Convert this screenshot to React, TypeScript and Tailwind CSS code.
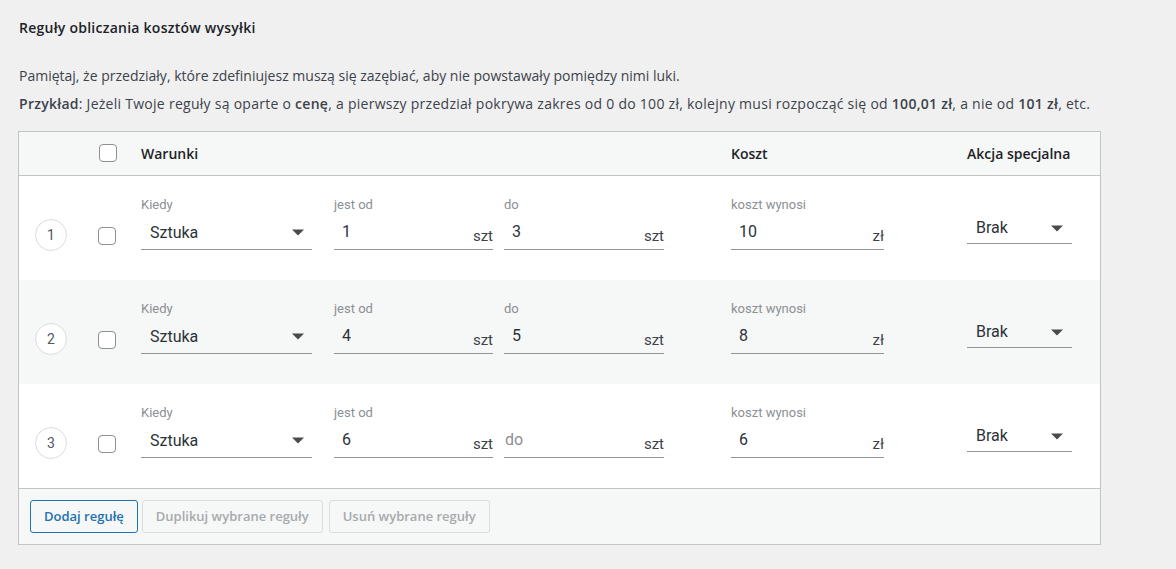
import { useState } from 'react'

type Rule = {
  id: number
  from: string
  to: string
  cost: string
}

const rules: Rule[] = [
  { id: 1, from: '1', to: '3', cost: '10' },
  { id: 2, from: '4', to: '5', cost: '8' },
  { id: 3, from: '6', to: '', cost: '6' },
]

const wpFont = { fontFamily: '"Open Sans", "Noto Sans", sans-serif' }
const inputFont = { fontFamily: 'Roboto, "Liberation Sans", Arial, sans-serif' }

function Caret() {
  return (
    <svg width="12" height="7" viewBox="0 0 12 7" className="shrink-0">
      <path d="M0 0.5 L12 0.5 L6 6.5 Z" fill="#4a4a4a" />
    </svg>
  )
}

function Checkbox() {
  return <span className="block w-[18px] h-[18px] rounded-[4px] border border-[#8c8f94] bg-white" />
}

function FieldLabel({ children }: { children: React.ReactNode }) {
  return (
    <div className="text-[13px] leading-[14px] text-[#8c8f94] h-[14px]" style={inputFont}>
      {children}
    </div>
  )
}

function NumberField({ label, value, unit, width, placeholder }: { label: string; value: string; unit: string; width: string; placeholder?: string }) {
  // empty field: label hidden, placeholder sits on the line like a floating label
  return (
    <div className={width}>
      <FieldLabel>{value ? label : ''}</FieldLabel>
      <div className="mt-[2px] h-[36px] border-b border-[#949494] flex items-end pb-[5px]" style={inputFont}>
        <span
          className={`flex-1 text-[16px] leading-[24px] self-stretch flex items-center pt-[6px] ${
            value ? 'pl-[8px] text-[#2c3338]' : 'pl-[1px] text-[#8c8f94]'
          }`}
        >
          {value || placeholder}
        </span>
        <span className="text-[15px] leading-[16px] text-[#3c434a]">{unit}</span>
      </div>
    </div>
  )
}

function RuleRow({ rule, shaded }: { rule: Rule; shaded: boolean }) {
  return (
    <div className={`flex h-[104px] ${shaded ? 'bg-[#f6f7f7]' : 'bg-white'}`}>
      <div className="w-[79px] shrink-0 pl-[16px] pt-[43px]">
        <span
          className="flex items-center justify-center w-[32px] h-[32px] rounded-full border border-[#dcdcde] bg-white text-[14px] text-[#50575e]"
          style={inputFont}
        >
          {rule.id}
        </span>
      </div>
      <div className="w-[43px] shrink-0 pt-[51px]">
        <Checkbox />
      </div>
      <div className="pt-[22px] flex">
        <div className="w-[171px]">
          <FieldLabel>Kiedy</FieldLabel>
          <div
            className="mt-[2px] h-[36px] border-b border-[#949494] flex items-center pt-[2px] pl-[9px] pr-[8px] text-[16px] text-[#2c3338]"
            style={inputFont}
          >
            <span className="flex-1">Sztuka</span>
            <Caret />
          </div>
        </div>
        <div className="ml-[22px]">
          <NumberField label="jest od" value={rule.from} unit="szt" width="w-[159px]" />
        </div>
        <div className="ml-[11px]">
          <NumberField label="do" value={rule.to} unit="szt" width="w-[160px]" placeholder="do" />
        </div>
        <div className="ml-[67px]">
          <NumberField label="koszt wynosi" value={rule.cost} unit="zł" width="w-[153px]" />
        </div>
      </div>
      <div className="ml-[83px] pt-[38px]">
        <div
          className="w-[105px] h-[30px] border-b border-[#949494] flex items-center pl-[9px] pr-[9px] text-[16px] text-[#2c3338]"
          style={inputFont}
        >
          <span className="flex-1 -mt-[1px]">Brak</span>
          <Caret />
        </div>
      </div>
    </div>
  )
}

export default function App() {
  const [selected] = useState(false)

  return (
    <div className="min-h-[569px] bg-[#f0f0f1] text-[#3c434a]" style={wpFont}>
      <div className="pl-[19px] pt-[18px] pr-[40px] pb-[24px]">
        <h2 className="text-[14px] leading-[20px] font-semibold tracking-[0.25px] text-[#1d2327]">
          Reguły obliczania kosztów wysyłki
        </h2>

        <p className="mt-[28px] text-[14px] leading-[20px] whitespace-nowrap">
          Pamiętaj, że przedziały, które zdefiniujesz muszą się zazębiać, aby nie powstawały pomiędzy nimi luki.
        </p>
        <p className="mt-[8px] text-[14px] leading-[20px] tracking-[0.27px] whitespace-nowrap">
          <strong className="font-semibold">Przykład</strong>: Jeżeli Twoje reguły są oparte o <strong className="font-semibold">cenę</strong>, a
          pierwszy przedział pokrywa zakres od 0 do 100 zł, kolejny musi rozpocząć się od <strong className="font-semibold">100,01 zł</strong>, a
          nie od <strong className="font-semibold">101 zł</strong>, etc.
        </p>

        <div className="-ml-[1px] mt-[17px] w-[1083px] border border-[#c3c4c7] bg-white">
          <div className="flex items-center h-[44px] bg-[#f6f7f7] border-b border-[#c3c4c7] text-[14px] font-semibold text-[#1d2327]">
            <div className="w-[80px] shrink-0" />
            <div className="w-[42px] shrink-0 -mt-[1px]">
              <Checkbox />
            </div>
            <div className="w-[590px] shrink-0">Warunki</div>
            <div className="w-[236px] shrink-0">Koszt</div>
            <div>Akcja specjalna</div>
          </div>

          {rules.map((rule, i) => (
            <RuleRow key={rule.id} rule={rule} shaded={i % 2 === 1} />
          ))}

          <div className="flex gap-[4px] h-[56px] items-center pl-[11px] bg-[#f6f7f7] border-t border-[#c3c4c7] text-[13px] font-semibold">
            <button className="h-[33px] px-[13px] rounded-[3px] border border-[#2271b1] text-[#2271b1] bg-[#f6f7f7]">
              Dodaj regułę
            </button>
            <button
              disabled={!selected}
              className="h-[33px] px-[13px] rounded-[3px] border border-[#dcdcde] text-[#a7aaad] bg-[#f6f7f7]"
            >
              Duplikuj wybrane reguły
            </button>
            <button
              disabled={!selected}
              className="ml-[2px] h-[33px] px-[13px] rounded-[3px] border border-[#dcdcde] text-[#a7aaad] bg-[#f6f7f7]"
            >
              Usuń wybrane reguły
            </button>
          </div>
        </div>
      </div>
    </div>
  )
}
